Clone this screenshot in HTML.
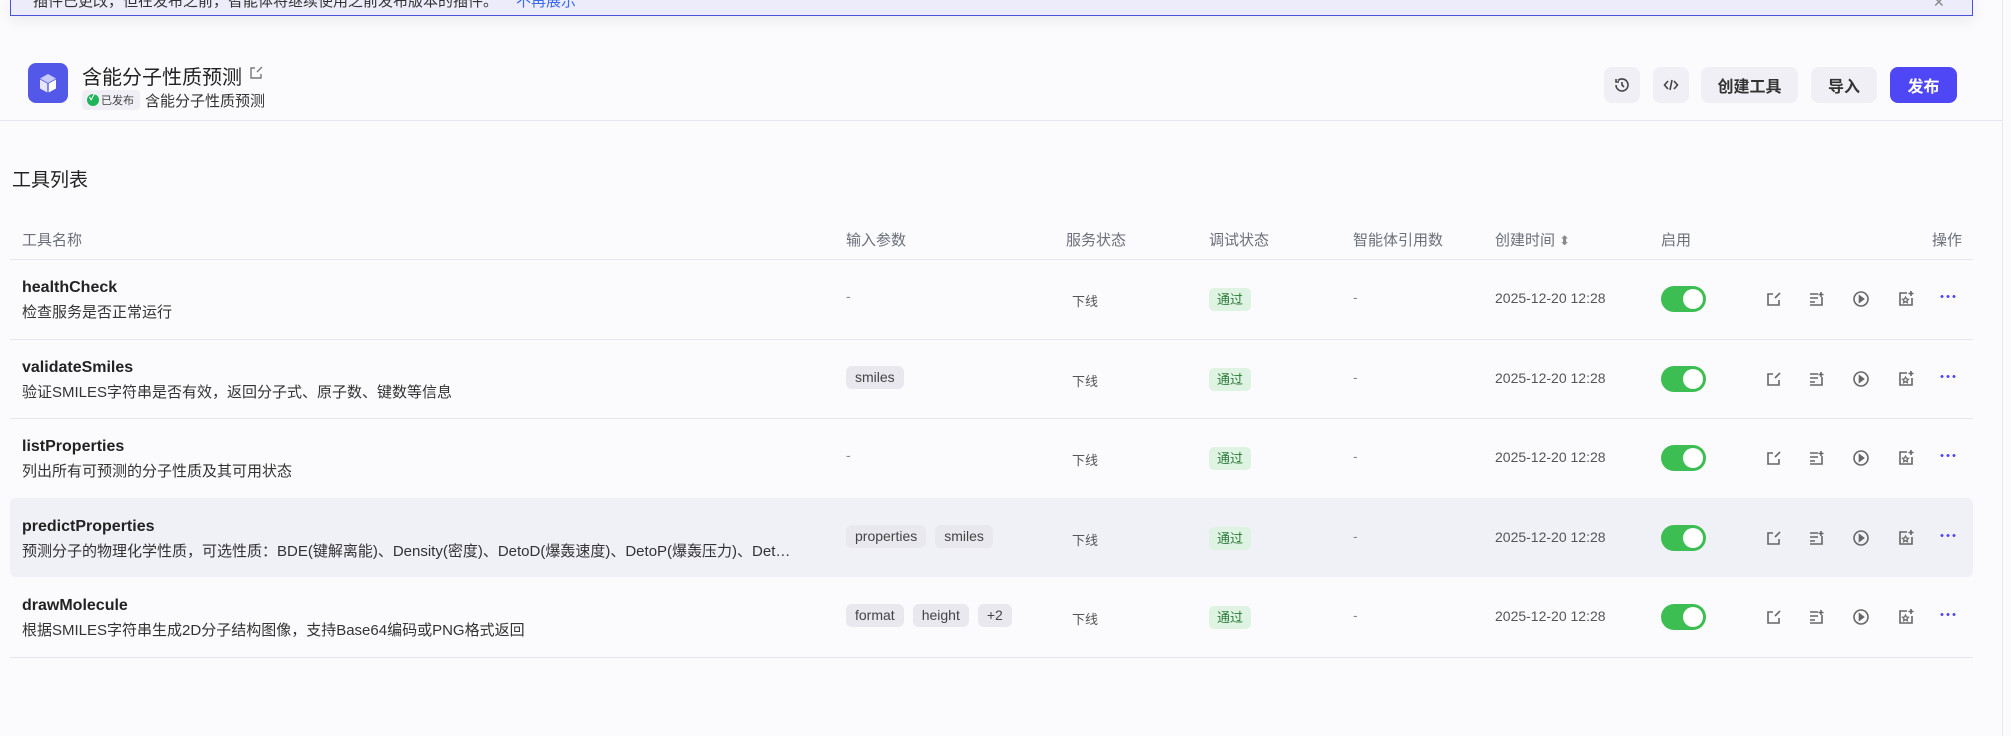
<!DOCTYPE html>
<html><head><meta charset="utf-8"><style>
*{box-sizing:border-box;margin:0;padding:0}
body{width:2011px;height:736px;overflow:hidden;background:#fbfbfd;font-family:"Liberation Sans","Noto Sans CJK SC",sans-serif;color:#1f2329;position:relative}
.a{position:absolute;white-space:nowrap}
.banner{left:10px;top:-10px;width:1963px;height:26px;background:#ececfb;border:1.5px solid #4a52d6;box-shadow:0 6px 14px rgba(0,0,0,.06);overflow:hidden}
.btn{position:absolute;top:67px;height:36px;border-radius:8px;background:#efeff5;font-size:16px;font-weight:bold;color:#333;display:flex;align-items:center;justify-content:center}
.th{font-size:15px;color:#6b6f7a;top:229px}
.line{position:absolute;left:10px;width:1963px;height:1px;background:#e6e6ec}
.nm{font-size:16px;font-weight:bold;color:#222;left:22px}
.ds{font-size:15px;color:#333;left:22px}
.tag{display:inline-block;height:23px;line-height:23px;padding:0 9px;border-radius:6px;background:#e8e8ee;font-size:14px;color:#444;margin-right:9px}
.st{font-size:13px;color:#555;left:1072px}
.ok{left:1209px;height:23px;line-height:23px;padding:0 8px;border-radius:5px;background:#dff3e3;color:#2b7a3a;font-size:13px}
.dash{left:1353px;color:#888;font-size:14px}
.tm{left:1495px;font-size:14px;color:#555}
.tg{left:1661px;width:45px;height:26px;border-radius:13px;background:#3dbe52}
.tg:after{content:"";position:absolute;right:3px;top:3px;width:20px;height:20px;border-radius:50%;background:#fff}
svg.i{position:absolute;width:18px;height:18px;fill:none;stroke:#666;stroke-width:1.6}
</style></head><body>
<div class="a banner"><div class="a" style="left:22px;top:-1px;font-size:15px;color:#333">插件已更改，但在发布之前，智能体将继续使用之前发布版本的插件。<span style="color:#3b6cf0;margin-left:18px">不再展示</span></div></div>
<div class="a" style="left:1933px;top:-6px;font-size:14px;color:#888">✕</div>
<div class="a" style="left:2002px;top:0;width:1px;height:736px;background:#e8e8ee"></div>
<div class="a" style="left:28px;top:63px;width:40px;height:40px;border-radius:8px;background:#5458e8"></div>
<svg class="a" style="left:36px;top:71px" width="24" height="24" viewBox="0 0 24 24"><path d="M12 3l8 4.5-8 4.5-8-4.5z" fill="#c9cbff"/><path d="M4 8.5l7.3 4v9L4 17.5z" fill="#e6e7ff"/><path d="M20 8.5l-7.3 4v9L20 17.5z" fill="#ffffff"/></svg>
<div class="a" style="left:82px;top:61px;font-size:20px;color:#222">含能分子性质预测</div>
<svg class="a" style="left:248px;top:65px" width="16" height="16" viewBox="0 0 16 16" fill="none" stroke="#777" stroke-width="1.4"><path d="M13 9v4H3V3h4M9 7l5-5"/></svg>
<div class="a" style="left:82px;top:90px;height:20px;width:58px;background:#efeff5;border-radius:4px"></div>
<div class="a" style="left:87px;top:94px;width:12px;height:12px;border-radius:50%;background:#1fb45a"></div>
<div class="a" style="left:89px;top:90px;font-size:9px;color:#fff;font-weight:bold">✓</div>
<div class="a" style="left:101px;top:92px;font-size:11px;color:#444">已发布</div>
<div class="a" style="left:145px;top:90px;font-size:15px;color:#333">含能分子性质预测</div>
<div class="btn" style="left:1604px;width:36px"><svg width="18" height="18" viewBox="0 0 18 18" fill="none" stroke="#444" stroke-width="1.6"><path d="M3 9a6 6 0 1 0 2-4.5M3 3v3h3M9 6v3l2 2"/></svg></div>
<div class="btn" style="left:1653px;width:36px"><svg width="18" height="18" viewBox="0 0 18 18" fill="none" stroke="#444" stroke-width="1.6"><path d="M6 5L2.5 9 6 13M12 5l3.5 4L12 13M10 4L8 14"/></svg></div>
<div class="btn" style="left:1701px;width:97px">创建工具</div>
<div class="btn" style="left:1811px;width:66px">导入</div>
<div class="btn" style="left:1890px;width:67px;background:#4f46f5;color:#fff">发布</div>
<div class="line" style="left:0;width:2002px;top:120px"></div>
<div class="a" style="left:12px;top:165px;font-size:19px;color:#222">工具列表</div>
<div class="a th" style="left:22px">工具名称</div>
<div class="a th" style="left:846px">输入参数</div>
<div class="a th" style="left:1066px">服务状态</div>
<div class="a th" style="left:1209px">调试状态</div>
<div class="a th" style="left:1353px">智能体引用数</div>
<div class="a th" style="left:1495px">创建时间 <span style="font-size:13px;color:#888">⬍</span></div>
<div class="a th" style="left:1661px">启用</div>
<div class="a th" style="left:1932px">操作</div>
<div class="line" style="top:259px"></div>
<div class="a" style="left:10px;top:498px;width:1963px;height:79px;background:#f0f0f7;border-radius:6px"></div>
<div class="line" style="top:339px"></div><div class="line" style="top:418px"></div><div class="line" style="top:657px"></div>

<div id="rows"></div>
<script>
var R=[["healthCheck","检查服务是否正常运行",[]],["validateSmiles","验证SMILES字符串是否有效，返回分子式、原子数、键数等信息",["smiles"]],["listProperties","列出所有可预测的分子性质及其可用状态",[]],["predictProperties","预测分子的物理化学性质，可选性质：BDE(键解离能)、Density(密度)、DetoD(爆轰速度)、DetoP(爆轰压力)、Det…",["properties","smiles"]],["drawMolecule","根据SMILES字符串生成2D分子结构图像，支持Base64编码或PNG格式返回",["format","height","+2"]]];
var h="";
var ic=['<path d="M14 10v5H3V4h5M10 8l5-5"/>','<path d="M3 4h8M3 8h8M3 12h5M3 15h12V7M14 2v5M11.5 4.5h5"/>','<circle cx="9" cy="9" r="7"/><path d="M7.5 6v6l4-3z" fill="#666"/>','<path d="M10 3H3v12h12V8M14 1v5M11.5 3.5h5"/><path d="M8.5 7l1 2 2 .3-1.5 1.4.4 2-1.9-1-1.9 1 .4-2L5.5 9.3l2-.3z" stroke-width="1.2"/>'];
R.forEach(function(r,k){var y=259+k*79.5;
h+='<div class="a nm" style="top:'+(y+20)+'px">'+r[0]+'</div><div class="a ds" style="top:'+(y+42)+'px;'+(k==3?'width:805px;overflow:hidden':'')+'">'+r[1]+'</div>';
if(r[2].length){h+='<div class="a" style="left:846px;top:'+(y+27)+'px">'+r[2].map(function(t){return '<span class="tag">'+t+'</span>'}).join('')+'</div>';}else h+='<div class="a dash" style="left:846px;top:'+(y+29)+'px">-</div>';
h+='<div class="a st" style="top:'+(y+32)+'px">下线</div><div class="a ok" style="top:'+(y+29)+'px">通过</div><div class="a dash" style="top:'+(y+30)+'px">-</div><div class="a tm" style="top:'+(y+31)+'px">2025-12-20 12:28</div><div class="a tg" style="top:'+(y+27)+'px"></div>';
[1765,1807,1852,1897].forEach(function(x,j){h+='<svg class="i" viewBox="0 0 18 18" style="left:'+x+'px;top:'+(y+31)+'px">'+ic[j]+'</svg>';});
h+='<div class="a" style="left:1939px;top:'+(y+36)+'px;width:18px;height:3px;background:radial-gradient(circle,#4f46f5 1.3px,transparent 1.6px) 0 0/6px 3px repeat-x"></div>';
});
document.getElementById("rows").innerHTML=h;
</script>
</body></html>
